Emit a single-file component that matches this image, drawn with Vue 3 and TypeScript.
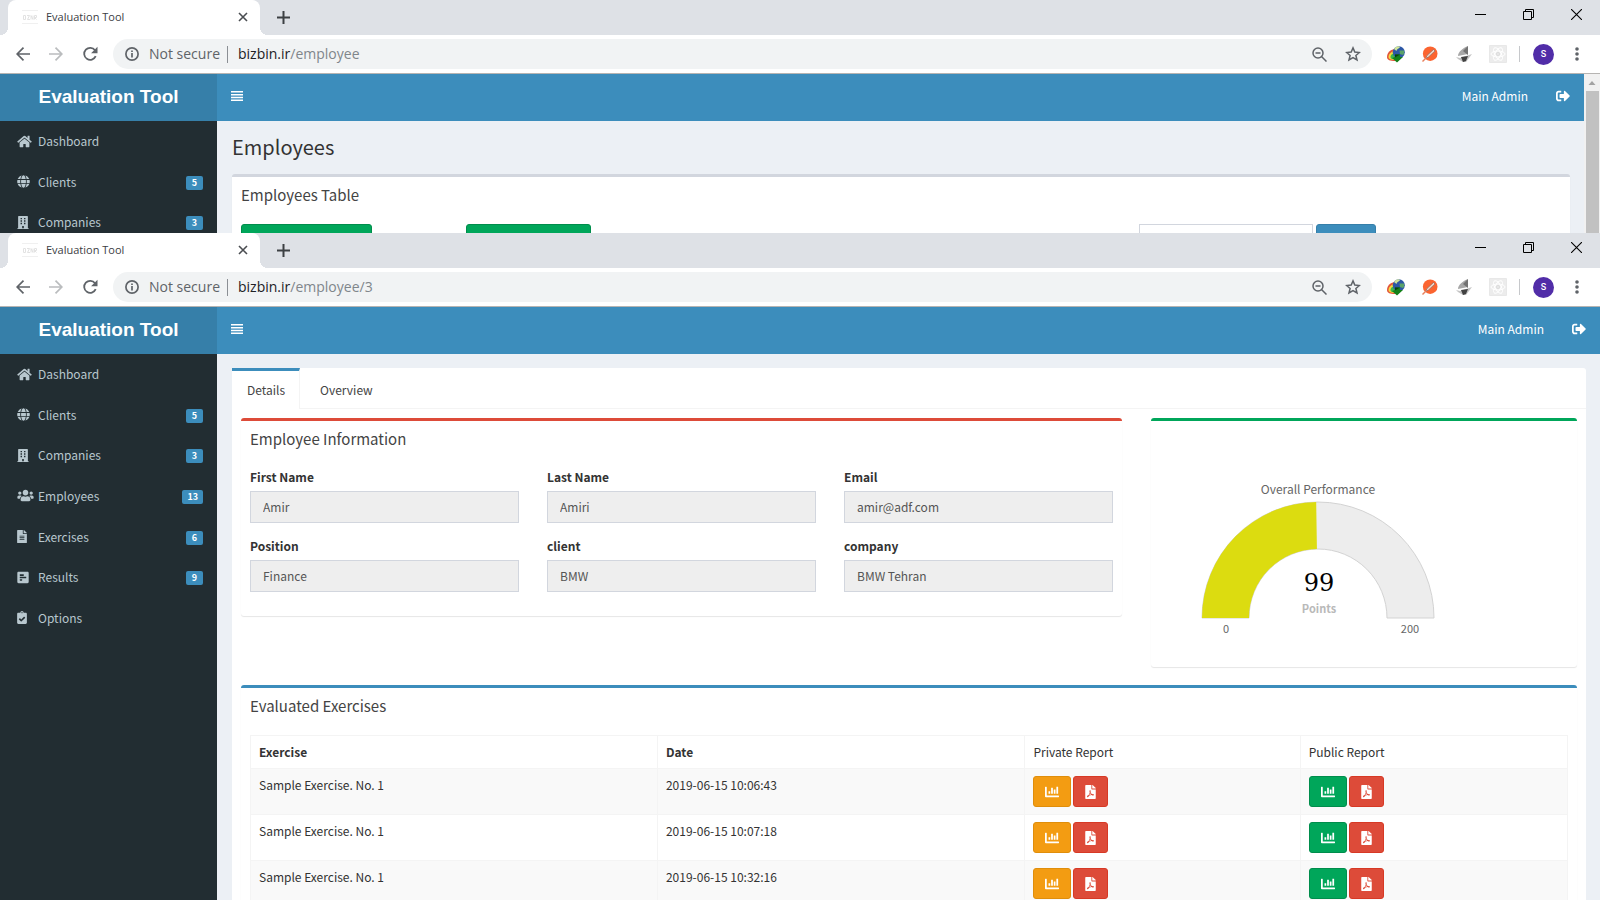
<script setup lang="ts">
interface MenuItem {
  label: string
  icon: string
  box: string
  width: number
  count?: number
}

interface BrowserWindow {
  id: string
  path: string
  detail: boolean
  menu: MenuItem[]
}

interface Field {
  id: string
  label: string
  value: string
}

const menu: MenuItem[] = [
  {
    label: 'Dashboard',
    box: '0 0 576 512',
    width: 15,
    icon: 'M280.37 148.26L96 300.11V464a16 16 0 0 0 16 16l112.06-.29a16 16 0 0 0 15.92-16V368a16 16 0 0 1 16-16h64a16 16 0 0 1 16 16v95.64a16 16 0 0 0 16 16.05L464 480a16 16 0 0 0 16-16V300L295.67 148.26a12.19 12.19 0 0 0-15.3 0zM571.6 251.47L488 182.56V44.05a12 12 0 0 0-12-12h-56a12 12 0 0 0-12 12v72.61L318.47 43a48 48 0 0 0-61 0L4.34 251.47a12 12 0 0 0-1.6 16.9l25.5 31A12 12 0 0 0 45.15 301l235.22-193.74a12.19 12.19 0 0 1 15.3 0L530.9 301a12 12 0 0 0 16.9-1.6l25.5-31a12 12 0 0 0-1.7-16.93z',
  },
  {
    label: 'Clients',
    box: '0 0 496 512',
    width: 13,
    count: 5,
    icon: 'M336.5 160C322 70.7 287.8 8 248 8s-74 62.7-88.5 152h177zM152 256c0 22.2 1.2 43.5 3.3 64h185.3c2.1-20.5 3.3-41.8 3.3-64s-1.2-43.5-3.3-64H155.3c-2.1 20.5-3.3 41.8-3.3 64zm324.7-96c-28.6-67.9-86.5-120.4-158-141.6 24.4 33.8 41.2 84.7 50 141.6h108zM177.2 18.4C105.8 39.6 47.8 92.1 19.3 160h108c8.7-56.9 25.5-107.8 49.9-141.6zM487.4 192H372.7c2.1 21 3.3 42.5 3.3 64s-1.2 43-3.3 64h114.6c5.5-20.5 8.6-41.8 8.6-64s-3.1-43.5-8.5-64zM120 256c0-21.5 1.2-43 3.3-64H8.6C3.2 212.5 0 233.8 0 256s3.2 43.5 8.6 64h114.6c-2-21-3.2-42.5-3.2-64zm39.5 96c14.5 89.3 48.7 152 88.5 152s74-62.7 88.5-152h-177zm159.3 141.6c71.4-21.2 129.4-73.7 158-141.6h-108c-8.8 56.9-25.6 107.8-50 141.6zM19.3 352c28.6 67.9 86.5 120.4 158 141.6-24.4-33.8-41.2-84.7-50-141.6h-108z',
  },
  {
    label: 'Companies',
    box: '0 0 448 512',
    width: 12,
    count: 3,
    icon: 'M436 480h-20V24c0-13.3-10.7-24-24-24H56C42.7 0 32 10.7 32 24v456H12c-6.6 0-12 5.4-12 12v20h448v-20c0-6.6-5.4-12-12-12zM128 76h56v56h-56zM264 76h56v56h-56zM128 172h56v56h-56zM264 172h56v56h-56zM128 268h56v56h-56zM264 268h56v56h-56zM192 396h64v84h-64z',
  },
  {
    label: 'Employees',
    box: '0 0 640 512',
    width: 17,
    count: 13,
    icon: 'M96 224c35.3 0 64-28.7 64-64s-28.7-64-64-64-64 28.7-64 64 28.7 64 64 64zm448 0c35.3 0 64-28.7 64-64s-28.7-64-64-64-64 28.7-64 64 28.7 64 64 64zm32 32h-64c-17.6 0-33.5 7.1-45.1 18.6 40.3 22.1 68.9 62 75.1 109.4h66c17.7 0 32-14.3 32-32v-32c0-35.3-28.7-64-64-64zm-256 0c61.9 0 112-50.1 112-112S381.9 32 320 32 208 82.1 208 144s50.1 112 112 112zm76.8 32h-8.3c-20.8 10-43.9 16-68.5 16s-47.6-6-68.5-16h-8.3C179.6 288 128 339.6 128 403.2V432c0 26.5 21.5 48 48 48h288c26.5 0 48-21.5 48-48v-28.8c0-63.6-51.6-115.2-115.2-115.2zm-223.7-13.4C161.5 263.1 145.6 256 128 256H64c-35.3 0-64 28.7-64 64v32c0 17.7 14.3 32 32 32h65.9c6.3-47.4 34.9-87.3 75.2-109.4z',
  },
  {
    label: 'Exercises',
    box: '0 0 384 512',
    width: 10,
    count: 6,
    icon: 'M224 136V0H24C10.7 0 0 10.7 0 24v464c0 13.3 10.7 24 24 24h336c13.3 0 24-10.7 24-24V160H248c-13.2 0-24-10.8-24-24zm64 236c0 6.6-5.4 12-12 12H108c-6.6 0-12-5.4-12-12v-8c0-6.6 5.4-12 12-12h168c6.6 0 12 5.4 12 12v8zm0-64c0 6.6-5.4 12-12 12H108c-6.6 0-12-5.4-12-12v-8c0-6.6 5.4-12 12-12h168c6.6 0 12 5.4 12 12v8zm0-72v8c0 6.6-5.4 12-12 12H108c-6.6 0-12-5.4-12-12v-8c0-6.6 5.4-12 12-12h168c6.6 0 12 5.4 12 12zm96-114.1v6.1H256V0h6.1c6.4 0 12.5 2.5 17 7l97.9 98c4.5 4.5 7 10.6 7 16.9z',
  },
  {
    label: 'Results',
    box: '0 0 448 512',
    width: 12,
    count: 9,
    icon: 'M448 432V80c0-26.5-21.5-48-48-48H48C21.5 32 0 53.5 0 80v352c0 26.5 21.5 48 48 48h352c26.5 0 48-21.5 48-48zM112 192c-8.84 0-16-7.16-16-16v-32c0-8.84 7.16-16 16-16h128c8.84 0 16 7.16 16 16v32c0 8.84-7.16 16-16 16H112zm0 96c-8.84 0-16-7.16-16-16v-32c0-8.84 7.16-16 16-16h224c8.84 0 16 7.16 16 16v32c0 8.84-7.16 16-16 16H112zm0 96c-8.84 0-16-7.16-16-16v-32c0-8.84 7.16-16 16-16h64c8.84 0 16 7.16 16 16v32c0 8.84-7.16 16-16 16h-64z',
  },
  {
    label: 'Options',
    box: '0 0 384 512',
    width: 10,
    icon: 'M336 64h-80c0-35.3-28.7-64-64-64s-64 28.7-64 64H48C21.5 64 0 85.5 0 112v352c0 26.5 21.5 48 48 48h288c26.5 0 48-21.5 48-48V112c0-26.5-21.5-48-48-48zM192 40c13.3 0 24 10.7 24 24s-10.7 24-24 24-24-10.7-24-24 10.7-24 24-24zm121.2 231.8l-143 141.8c-4.7 4.7-12.3 4.6-17-.1l-82.6-83.3c-4.7-4.7-4.6-12.3.1-17L99.1 285c4.7-4.7 12.3-4.6 17 .1l46 46.4 106-105.2c4.7-4.7 12.3-4.6 17 .1l28.2 28.4c4.7 4.8 4.6 12.3-.1 17z',
  },
]

const windows: BrowserWindow[] = [
  { id: 'list', path: '/employee', detail: false, menu: menu.slice(0, 3) },
  { id: 'detail', path: '/employee/3', detail: true, menu },
]

const fields: Field[] = [
  { id: 'first-name', label: 'First Name', value: 'Amir' },
  { id: 'last-name', label: 'Last Name', value: 'Amiri' },
  { id: 'email', label: 'Email', value: 'amir@adf.com' },
  { id: 'position', label: 'Position', value: 'Finance' },
  { id: 'client', label: 'client', value: 'BMW' },
  { id: 'company', label: 'company', value: 'BMW Tehran' },
]

const exercises = [
  { name: 'Sample Exercise. No. 1', date: '2019-06-15 10:06:43' },
  { name: 'Sample Exercise. No. 1', date: '2019-06-15 10:07:18' },
  { name: 'Sample Exercise. No. 1', date: '2019-06-15 10:32:16' },
]

const reports = [
  { kind: 'private', chart: 'warning' },
  { kind: 'public', chart: 'success' },
]

const chartIcon =
  'M332.8 320h38.4c6.4 0 12.8-6.4 12.8-12.8V172.8c0-6.4-6.4-12.8-12.8-12.8h-38.4c-6.4 0-12.8 6.4-12.8 12.8v134.4c0 6.4 6.4 12.8 12.8 12.8zm96 0h38.4c6.4 0 12.8-6.4 12.8-12.8V76.8c0-6.4-6.4-12.8-12.8-12.8h-38.4c-6.4 0-12.8 6.4-12.8 12.8v230.4c0 6.4 6.4 12.8 12.8 12.8zm-288 0h38.4c6.4 0 12.8-6.4 12.8-12.8v-70.4c0-6.4-6.4-12.8-12.8-12.8h-38.4c-6.4 0-12.8 6.4-12.8 12.8v70.4c0 6.4 6.4 12.8 12.8 12.8zm96 0h38.4c6.4 0 12.8-6.4 12.8-12.8V108.8c0-6.4-6.4-12.8-12.8-12.8h-38.4c-6.4 0-12.8 6.4-12.8 12.8v198.4c0 6.4 6.4 12.8 12.8 12.8zM496 384H64V80c0-8.84-7.16-16-16-16H16C7.16 64 0 71.16 0 80v336c0 17.67 14.33 32 32 32h464c8.84 0 16-7.16 16-16v-32c0-8.84-7.16-16-16-16z'

const pdfIcon =
  'M181.9 256.1c-5-16-4.9-46.9-2-46.9 8.4 0 7.6 36.9 2 46.9zm-1.7 47.2c-7.7 20.2-17.3 43.3-28.4 62.7 18.3-7 39-17.2 62.9-21.9-12.7-9.6-24.9-23.4-34.5-40.8zM86.1 428.1c0 .8 13.2-5.4 34.9-40.2-6.7 6.3-29.1 24.5-34.9 40.2zM248 160h136v328c0 13.3-10.7 24-24 24H24c-13.3 0-24-10.7-24-24V24C0 10.7 10.7 0 24 0h200v136c0 13.2 10.8 24 24 24zm-8 171.8c-20-12.2-33.3-29-42.7-53.8 4.5-18.5 11.6-46.6 6.2-64.2-4.7-29.4-42.4-26.5-47.8-6.8-5 18.3-.4 44.1 8.1 77-11.6 27.6-28.7 64.6-40.8 85.8-.1 0-.1.1-.2.1-27.1 13.9-73.6 44.5-54.5 68 5.6 6.9 16 10 21.5 10 17.9 0 35.7-18 61.1-61.8 25.8-8.5 54.1-19.1 79-23.2 21.7 11.8 47.1 19.5 64 19.5 29.2 0 31.2-32 19.7-43.4-13.9-13.6-54.3-9.7-73.6-7.2zM377 105L279 7c-4.5-4.5-10.6-7-17-7h-6v128h128v-6.1c0-6.3-2.5-12.4-7-16.9zm-74.1 255.3c4.1-2.7-2.5-11.9-42.8-9 37.1 15.8 42.8 9 42.8 9z'

const gauge = { value: 99, max: 200, cx: 167, cy: 197, outer: 116, inner: 69 }

/* Half-ring segment running clockwise from the left end to the given share. */
function ring(share: number): string {
  const { cx, cy, outer, inner } = gauge
  const angle = Math.PI * (1 - share)
  const at = (r: number) =>
    `${(cx + r * Math.cos(angle)).toFixed(2)} ${(cy - r * Math.sin(angle)).toFixed(2)}`
  return `M${cx - outer} ${cy}A${outer} ${outer} 0 0 1 ${at(outer)}L${at(inner)}A${inner} ${inner} 0 0 0 ${cx - inner} ${cy}Z`
}

const gaugeTrack = ring(1)
const gaugeFill = ring(gauge.value / gauge.max)
</script>

<template>
  <div class="screen">
    <section v-for="win in windows" :key="win.id" class="window" :class="win.id">
      <div class="tabstrip">
        <div class="tab">
          <svg class="favicon" width="16" height="16" viewBox="0 0 16 16" fill="none" stroke="#e2e2e2">
            <path d="M0 1.5h16M0 14.5h16" stroke="#f0f0f0" />
            <path d="M1.5 6.500h2v4h-2zM5 6.500h2.500l-2 4h2.500M9 10.500v-4l2 4v-4M12.500 10.500v-4h2v2h-2l2 2" />
          </svg>
          <span class="tab-title">Evaluation Tool</span>
          <button class="plain" aria-label="Close tab">
            <svg width="10" height="10" viewBox="0 0 10 10" stroke="#4a4d51" stroke-width="1.6">
              <path d="M1 1l8 8M9 1l-8 8" />
            </svg>
          </button>
        </div>
        <button class="plain new-tab" aria-label="New tab">
          <svg width="13" height="13" viewBox="0 0 13 13" stroke="#3c4043" stroke-width="2">
            <path d="M6.500 0v13M0 6.500h13" />
          </svg>
        </button>
        <div class="controls">
          <button class="plain" aria-label="Minimize">
            <svg width="11" height="11" viewBox="0 0 11 11" stroke="#000"><path d="M0 5.500h11" /></svg>
          </button>
          <button class="plain" aria-label="Restore">
            <svg width="11" height="11" viewBox="0 0 11 11" stroke="#000" fill="none">
              <path d="M.5 2.500h8v8h-8zM2.500 2.500v-2h8v8h-2" />
            </svg>
          </button>
          <button class="plain" aria-label="Close">
            <svg width="11" height="11" viewBox="0 0 11 11" stroke="#000" stroke-width="1.1">
              <path d="M0 0l11 11M11 0L0 11" />
            </svg>
          </button>
        </div>
      </div>

      <div class="toolbar">
        <div class="history">
          <button class="plain" aria-label="Back">
            <svg width="14" height="14" viewBox="0 0 14 14" stroke="#5f6368" stroke-width="1.7" fill="none">
              <path d="M14 7H1.500M7.500.7L1.200 7l6.300 6.300" />
            </svg>
          </button>
          <button class="plain" aria-label="Forward">
            <svg width="14" height="14" viewBox="0 0 14 14" stroke="#babcbe" stroke-width="1.7" fill="none">
              <path d="M0 7h12.500M6.500.7L12.800 7l-6.300 6.300" />
            </svg>
          </button>
          <button class="plain" aria-label="Reload">
            <svg width="16" height="16" viewBox="0 0 16 16">
              <path d="M13.700 10.200A6 6 0 1 1 13 4.200" fill="none" stroke="#5f6368" stroke-width="1.8" />
              <path d="M15.500.8v6.400H9.100z" fill="#5f6368" />
            </svg>
          </button>
        </div>
        <div class="omnibox">
          <svg width="14" height="14" viewBox="0 0 14 14" fill="none" stroke="#5f6368" stroke-width="1.7">
            <circle cx="7" cy="7" r="6.100" />
            <path d="M7 6v4.500M7 3.500V5" />
          </svg>
          <span class="insecure">Not secure</span>
          <span class="bar"></span>
          <span class="url">bizbin.ir<span class="path">{{ win.path }}</span></span>
          <button class="plain" aria-label="Zoom">
            <svg width="15" height="15" viewBox="0 0 15 15" fill="none" stroke="#5f6368" stroke-width="1.5">
              <circle cx="6" cy="6" r="5" />
              <path d="M3.500 6h5M9.500 9.500l5 5" />
            </svg>
          </button>
          <button class="plain" aria-label="Bookmark this page">
            <svg width="16" height="16" viewBox="0 0 16 16" fill="none" stroke="#5f6368" stroke-width="1.5">
              <path d="M8 1.900l1.800 4.200 4.600.4-3.500 3 1.100 4.500L8 11.600 4 14l1.100-4.500-3.500-3 4.600-.4z" />
            </svg>
          </button>
        </div>
        <div class="extensions">
          <svg width="18" height="18" viewBox="0 0 18 18">
            <path d="M9 4C3 4 0 8 0 12c0 3 3 4 8 4z" fill="#e2553a" />
            <path d="M9 6c-4.500 0-7.500 3-7.500 6 0 2 2 3 7 3z" fill="#f5d93f" />
            <path d="M9 8c-3.500 0-5.500 2-5.500 4 0 2 2 2.500 6 2z" fill="#3fb84a" />
            <circle cx="11.800" cy="7.200" r="6" fill="#2c57a5" />
            <path d="M7 4c1.500-2.500 4.500-3.500 6-2-1 2-3 1.500-3.500 4z" fill="#cfe39a" />
            <path d="M12.500 5.500h4.500c.6 2 0 3.500-1 4.500l-3-1z" fill="#5aa36a" />
            <path d="M8 9.500h5V12h3l-6 5.500L5 13l3-1z" fill="#138019" />
            <path d="M8 9.500h5l-5 3z" fill="#0a420e" />
          </svg>
          <svg width="18" height="18" viewBox="0 0 18 18">
            <circle cx="9.200" cy="8.700" r="7.300" fill="#fb6430" />
            <path d="M12.500 4.500l1.500 1.500-6.500 6-3 1.500 1.500-3z" fill="#f3d5c5" stroke="#8d6a61" stroke-width=".7" />
            <path d="M1.500 16.500l3.500-3.500" stroke="#e8805c" stroke-width="1.500" />
          </svg>
          <svg width="18" height="18" viewBox="0 0 18 18">
            <path d="M3 11c0-4 5-8 10-10-1 3-1 5 0 8z" fill="#a7a7a7" />
            <path d="M8 6l5-5v9z" fill="#737373" />
            <path d="M1 12l4 1 9-3 3-1-3 4-3 4H8l-5-3z" fill="#c4c4c4" />
            <path d="M6 12l7-1-2 5-3 1z" fill="#414141" />
          </svg>
          <svg width="18" height="18" viewBox="0 0 18 18" fill="none" stroke="#dcdcdc">
            <path d="M.5.5h17v17H.5z" fill="#ececec" stroke="#e8e8e8" />
            <g stroke="#fff">
              <ellipse cx="9" cy="9" rx="7" ry="3" />
              <ellipse cx="9" cy="9" rx="7" ry="3" transform="rotate(60 9 9)" />
              <ellipse cx="9" cy="9" rx="7" ry="3" transform="rotate(120 9 9)" />
            </g>
            <circle cx="9" cy="9" r="1.500" />
          </svg>
        </div>
        <span class="divider"></span>
        <span class="avatar">S</span>
        <button class="plain dots" aria-label="Menu">
          <svg width="16" height="16" viewBox="0 0 16 16" fill="#5f6368">
            <circle cx="8" cy="3" r="1.800" /><circle cx="8" cy="8" r="1.800" /><circle cx="8" cy="13" r="1.800" />
          </svg>
        </button>
      </div>

      <div class="viewport">
        <div class="app">
          <aside class="sidebar">
            <a class="logo" href="#">Evaluation Tool</a>
            <nav class="menu">
              <a v-for="item in win.menu" :key="item.label" class="menu-item" href="#">
                <span class="menu-icon">
                  <svg :width="item.width" height="13" :viewBox="item.box" fill="currentColor">
                    <path fill-rule="evenodd" :d="item.icon" />
                  </svg>
                </span>
                <span class="menu-label">{{ item.label }}</span>
                <span v-if="item.count" class="badge">{{ item.count }}</span>
              </a>
            </nav>
          </aside>

          <div class="main">
            <header class="topbar">
              <button class="plain" aria-label="Toggle navigation">
                <svg width="12" height="10" viewBox="0 0 12 10" fill="#fff">
                  <path d="M0 0h12v1.500H0zM0 3h12v1.500H0zM0 5.700h12v1.500H0zM0 8.500h12V10H0z" />
                </svg>
              </button>
              <a class="user" href="#">Main Admin</a>
              <a class="signout" href="#" aria-label="Sign out">
                <svg width="14" height="14" viewBox="0 0 512 512" fill="#fff">
                  <path d="M497 273L329 441c-15 15-41 4.500-41-17v-96H152c-13.300 0-24-10.700-24-24v-96c0-13.300 10.700-24 24-24h136V88c0-21.400 25.900-32 41-17l168 168c9.300 9.400 9.300 24.600 0 34zM192 436v-40c0-6.600-5.400-12-12-12H96c-17.700 0-32-14.300-32-32V160c0-17.700 14.300-32 32-32h84c6.600 0 12-5.400 12-12V76c0-6.600-5.400-12-12-12H96c-53 0-96 43-96 96v192c0 53 43 96 96 96h84c6.600 0 12-5.400 12-12z" />
                </svg>
              </a>
            </header>

            <main v-if="!win.detail" class="content">
              <h1>Employees</h1>
              <section class="box">
                <h2>Employees Table</h2>
                <div class="actions">
                  <button class="btn success wide" aria-label="Add employee"></button>
                  <button class="btn success" aria-label="Import employees"></button>
                  <input class="search" type="text" aria-label="Search employees" />
                  <button class="btn primary" aria-label="Search"></button>
                </div>
              </section>
            </main>

            <main v-else class="content">
              <div class="tabbox">
                <div class="tabs">
                  <a class="tab-link active" href="#">Details</a>
                  <a class="tab-link" href="#">Overview</a>
                </div>
                <div class="panes">
                  <div class="columns">
                    <section class="box danger info">
                      <h2>Employee Information</h2>
                      <form class="fields">
                        <div v-for="field in fields" :key="field.id" class="field">
                          <label :for="field.id">{{ field.label }}</label>
                          <input :id="field.id" type="text" :value="field.value" readonly />
                        </div>
                      </form>
                    </section>
                    <section class="box success">
                      <svg class="gauge" width="334" height="246" viewBox="0 0 334 246">
                        <path :d="gaugeTrack" fill="#ededed" stroke="#d3d3d3" />
                        <path :d="gaugeFill" fill="#dcdc10" />
                        <text class="gauge-title" x="167" y="73">Overall Performance</text>
                        <text class="gauge-value" x="168" y="170">{{ gauge.value }}</text>
                        <text class="gauge-unit" x="168" y="192">Points</text>
                        <text class="gauge-limit" x="75" y="212">0</text>
                        <text class="gauge-limit" x="259" y="212">{{ gauge.max }}</text>
                      </svg>
                    </section>
                  </div>
                  <section class="box primary">
                    <h2>Evaluated Exercises</h2>
                    <div class="table-wrap">
                      <table>
                        <colgroup>
                          <col class="c-name" /><col class="c-date" /><col class="c-private" /><col />
                        </colgroup>
                        <thead>
                          <tr>
                            <th scope="col">Exercise</th>
                            <th scope="col">Date</th>
                            <th scope="col" class="light">Private Report</th>
                            <th scope="col" class="light">Public Report</th>
                          </tr>
                        </thead>
                        <tbody>
                          <tr v-for="row in exercises" :key="row.date">
                            <td>{{ row.name }}</td>
                            <td>{{ row.date }}</td>
                            <td v-for="report in reports" :key="report.kind">
                              <div class="buttons">
                                <button class="btn chart" :class="report.chart" :aria-label="`Open ${report.kind} chart`">
                                  <svg width="14" height="14" viewBox="0 0 512 512" fill="#fff"><path :d="chartIcon" /></svg>
                                </button>
                                <button class="btn danger pdf" :aria-label="`Download ${report.kind} PDF`">
                                  <svg width="11" height="14" viewBox="0 0 384 512" fill="#fff"><path :d="pdfIcon" /></svg>
                                </button>
                              </div>
                            </td>
                          </tr>
                        </tbody>
                      </table>
                    </div>
                  </section>
                </div>
              </div>
            </main>
          </div>
        </div>
        <div v-if="!win.detail" class="scrollbar">
          <svg width="16" height="17" viewBox="0 0 16 17" fill="#a3a3a3"><path d="M4.500 11L8 7l3.500 4z" /></svg>
          <span class="thumb"></span>
        </div>
      </div>
    </section>
  </div>
</template>

<style>
body {
  margin: 0;
}
</style>

<style scoped>
.screen,
.screen * {
  box-sizing: border-box;
}

.screen {
  display: flex;
  flex-direction: column;
  height: 100vh;
  overflow: hidden;
  font-family: 'Noto Sans CJK SC', 'Noto Sans', sans-serif;
  font-size: 12px;
  line-height: 18px;
  color: #333;
}

svg {
  display: block;
  flex: none;
}

a {
  color: inherit;
  text-decoration: none;
}

.plain {
  padding: 0;
  border: 0;
  background: none;
}

.window {
  display: flex;
  flex-direction: column;
  overflow: hidden;
}

.window.list {
  flex: 0 0 233px;
}

.window.detail {
  flex: 1;
  min-height: 0;
}

/* Browser chrome */
.tabstrip {
  display: flex;
  flex: 0 0 35px;
  padding: 0 18px 0 8px;
  background: #dee1e6;
}

.tab {
  position: relative;
  display: flex;
  align-items: center;
  width: 252px;
  padding: 0 12px 2px 14px;
  border-radius: 8px 8px 0 0;
  background: #fff;
}

.tab::before,
.tab::after {
  content: '';
  position: absolute;
  bottom: 0;
  width: 8px;
  height: 8px;
}

.tab::before {
  right: 100%;
  background: radial-gradient(circle at 0 0, transparent 8px, #fff 8px);
}

.tab::after {
  left: 100%;
  background: radial-gradient(circle at 100% 0, transparent 8px, #fff 8px);
}

.tab-title {
  flex: 1;
  margin-left: 8px;
  font-family: 'Open Sans', sans-serif;
  font-size: 11px;
  color: #3c4043;
}

.new-tab {
  margin-left: 17px;
}

.controls {
  display: flex;
  gap: 37px;
  height: 29px;
  margin-left: auto;
}

.toolbar {
  display: flex;
  align-items: center;
  flex: 0 0 39px;
  padding: 0 15px 0 16px;
  border-bottom: 1px solid #b6b4b2;
  background: #fff;
}

.history {
  display: flex;
  align-items: center;
  gap: 19px;
  width: 97px;
}

.omnibox {
  display: flex;
  align-items: center;
  flex: 1;
  height: 30px;
  padding: 0 11px 0 12px;
  border-radius: 15px;
  background: #f1f3f4;
  font-family: 'Open Sans', sans-serif;
  font-size: 14px;
  color: #5f6368;
}

.insecure {
  margin-left: 10px;
}

.bar {
  width: 1px;
  height: 17px;
  margin: 0 10px 0 7px;
  background: #8b8f94;
}

.url {
  flex: 1;
  color: #202124;
}

.path {
  color: #80868b;
}

.omnibox .plain + .plain {
  margin-left: 18px;
}

.extensions {
  display: flex;
  gap: 16px;
  margin-left: 15px;
}

.divider {
  width: 1px;
  height: 16px;
  margin: 0 13px 0 12px;
  background: #c6c8cb;
}

.avatar {
  width: 21px;
  height: 21px;
  border-radius: 50%;
  background: #512da8;
  color: #fff;
  font-family: Roboto, sans-serif;
  font-size: 9px;
  font-weight: 500;
  line-height: 21px;
  text-align: center;
}

.dots {
  margin-left: 15px;
}

.viewport {
  display: flex;
  flex: 1;
  min-height: 0;
}

.scrollbar {
  flex: 0 0 16px;
  display: flex;
  flex-direction: column;
  background: #f1f1f1;
}

.thumb {
  flex: 1;
  margin: 0 1px 0 2px;
  background: #c1c1c1;
}

/* Application shell */
.app {
  display: flex;
  flex: 1;
  min-width: 0;
  background: #ecf0f5;
}

.sidebar {
  flex: 0 0 217px;
  background: #222d32;
  color: #b8c7ce;
}

.logo {
  display: block;
  height: 47px;
  background: #367fa9;
  color: #fff;
  font-family: 'Liberation Sans', Arial, sans-serif;
  font-size: 19px;
  font-weight: bold;
  line-height: 46px;
  text-align: center;
}

.menu {
  display: grid;
  grid-template-rows: repeat(7, 1fr);
  height: 284px;
}

.menu-item {
  display: flex;
  align-items: center;
  padding: 0 14px 0 17px;
}

.menu-icon {
  width: 21px;
}

.menu-label {
  flex: 1;
}

.badge {
  min-width: 17px;
  height: 14px;
  margin-top: 2px;
  padding: 0 5px;
  border-radius: 2px;
  background: #3c8dbc;
  color: #fff;
  font-size: 9px;
  font-weight: bold;
  line-height: 14px;
  text-align: center;
}

.main {
  flex: 1;
  min-width: 0;
}

.topbar {
  display: flex;
  align-items: center;
  height: 47px;
  padding: 0 14px 3px;
  background: #3c8dbc;
  color: #fff;
}

.user {
  margin-left: auto;
}

.signout {
  margin-left: 28px;
}

.content {
  padding: 14px 14px 0 15px;
}

h1 {
  margin: 0 0 15px;
  font-size: 20px;
  font-weight: normal;
  line-height: 24px;
}

h2 {
  margin: 0;
  padding: 8px 9px 10px;
  color: #444;
  font-size: 15px;
  font-weight: normal;
  line-height: 20px;
}

.box {
  border-top: 3px solid #d2d6de;
  border-radius: 3px;
  background: #fff;
  box-shadow: 0 1px 1px rgba(0, 0, 0, 0.1);
}

.box.danger {
  border-top-color: #dd4b39;
}

.box.success {
  border-top-color: #00a65a;
}

.box.primary {
  border-top-color: #3c8dbc;
}

.actions {
  display: flex;
  padding: 9px 194px 9px 9px;
}

.btn {
  display: flex;
  align-items: center;
  justify-content: center;
  height: 31px;
  padding: 0;
  border: 1px solid;
  border-radius: 3px;
}

.btn.success {
  border-color: #008d4c;
  background: #00a65a;
}

.btn.warning {
  border-color: #e08e0b;
  background: #f39c12;
}

.btn.danger {
  border-color: #d73925;
  background: #dd4b39;
}

.btn.primary {
  border-color: #367fa9;
  background: #3c8dbc;
}

.actions .btn.success {
  width: 125px;
}

.actions .btn.wide {
  width: 131px;
  margin-right: 94px;
}

.search {
  width: 174px;
  height: 31px;
  margin: 0 3px 0 auto;
  border: 1px solid #d2d6de;
}

.actions .btn.primary {
  width: 60px;
}

/* Employee details */
.tabbox {
  border-radius: 3px;
  background: #fff;
}

.tabs {
  display: flex;
  gap: 5px;
  height: 41px;
  border-bottom: 1px solid #f4f4f4;
}

.tab-link {
  height: 41px;
  padding: 10px 14px 0 15px;
  border-top: 3px solid transparent;
  color: #444;
}

.tab-link.active {
  border-top-color: #3c8dbc;
  border-right: 1px solid #f4f4f4;
  background: #fff;
}

.panes {
  padding: 9px;
}

.columns {
  display: grid;
  grid-template-columns: 881fr 426fr;
  align-items: start;
  gap: 29px;
  margin-bottom: 18px;
}

.info {
  padding-bottom: 24px;
}

.fields {
  display: grid;
  grid-template-columns: repeat(3, 1fr);
  gap: 14px 28px;
  padding: 9px 9px 0;
}

.field {
  display: flex;
  flex-direction: column;
  gap: 5px;
}

label {
  font-weight: bold;
}

.field input {
  width: 100%;
  height: 32px;
  padding: 0 12px 2px;
  border: 1px solid #d2d6de;
  background: #eee;
  color: #555;
  font: inherit;
}

.gauge text {
  text-anchor: middle;
  fill: #666;
}

.gauge .gauge-title {
  font-size: 12px;
}

.gauge .gauge-value {
  font-family: 'DejaVu Serif', serif;
  font-size: 24px;
  fill: #010101;
}

.gauge .gauge-unit {
  font-size: 11px;
  font-weight: bold;
  fill: #b9b9b9;
}

.gauge .gauge-limit {
  font-size: 11px;
}

.table-wrap {
  padding: 9px;
}

table {
  width: 100%;
  border-collapse: collapse;
  table-layout: fixed;
}

.c-name {
  width: 30.9%;
}

.c-date {
  width: 27.9%;
}

.c-private {
  width: 20.9%;
}

th,
td {
  padding: 7px 8px;
  border: 1px solid #f4f4f4;
  text-align: left;
  vertical-align: top;
}

th.light {
  font-weight: normal;
}

tbody tr:nth-child(odd) {
  background: #f9f9f9;
}

.buttons {
  display: flex;
  gap: 2px;
}

.btn.chart {
  width: 38px;
}

.btn.pdf {
  width: 35px;
}
</style>
